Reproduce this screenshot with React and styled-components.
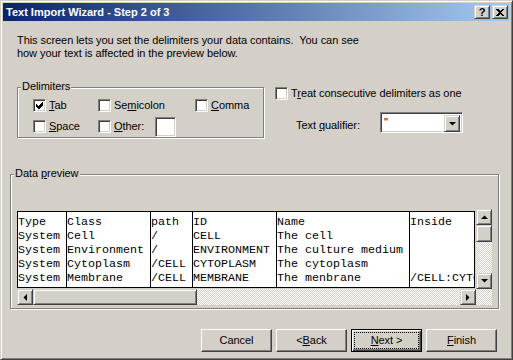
import styled, { createGlobalStyle, css } from "styled-components";

const GlobalStyle = createGlobalStyle`
    html, body {
        margin: 0;
        padding: 0;
        background: #d4d0c8;
    }
    body {
        font-family: "Liberation Sans", Arial, sans-serif;
        font-size: 11px;
        letter-spacing: -0.06px;
        color: #000;
    }
`;

const raised = css`
    box-sizing: border-box;
    background: #d4d0c8;
    border: 1px solid;
    border-color: #d4d0c8 #404040 #404040 #d4d0c8;
    box-shadow: inset 1px 1px #fff, inset -1px -1px #808080;
`;

const sunken = css`
    box-sizing: border-box;
    background: #fff;
    border: 1px solid;
    border-color: #808080 #fff #fff #808080;
    box-shadow: inset 1px 1px #404040, inset -1px -1px #d4d0c8;
`;

const dither = css`
    background-color: #fff;
    background-image: repeating-conic-gradient(#d4d0c8 0 25%, #fff 0 50%);
    background-size: 2px 2px;
`;

const Window = styled.div`
    width: 513px;
    height: 360px;
    box-sizing: border-box;
    border: 1px solid;
    border-color: #d4d0c8 #404040 #404040 #d4d0c8;
    box-shadow: inset 1px 1px #fff, inset -1px -1px #808080;
    padding: 2px;
    background: #d4d0c8;
    display: flex;
    flex-direction: column;
`;

const TitleBar = styled.div`
    height: 18px;
    display: flex;
    align-items: center;
    padding: 0 2px 0 3px;
    background: linear-gradient(to right, #0a246a, #a6caf0);
`;

const TitleText = styled.span`
    color: #fff;
    font-weight: 700;
    font-size: 11px;
    line-height: 13px;
    letter-spacing: 0;
`;

const CaptionButtons = styled.div`
    margin-left: auto;
    display: flex;
    gap: 2px;
`;

const CaptionButton = styled.div`
    ${raised};
    width: 16px;
    height: 14px;
    display: flex;
    align-items: center;
    justify-content: center;
    font-weight: 700;
    font-size: 11px;
    line-height: 12px;
`;

const Content = styled.div`
    flex: 1;
    display: flex;
    flex-direction: column;
`;

const Intro = styled.p`
    margin: 13px 0 0 14px;
    line-height: 13px;
`;

const TopRow = styled.div`
    margin-top: 27px;
    padding-left: 14px;
    display: flex;
    align-items: flex-start;
`;

const GroupBox = styled.div`
    position: relative;
    box-sizing: border-box;
    width: ${(p) => p.$w}px;
    height: ${(p) => p.$h}px;
    border: 1px solid #808080;
    box-shadow: inset 1px 1px #fff, 1px 1px #fff;
    margin: ${(p) => p.$mt || 0}px 0 0 ${(p) => p.$ml || 0}px;
`;

const GroupTitle = styled.span`
    position: absolute;
    top: -8px;
    left: 3px;
    padding: 0 1px;
    line-height: 13px;
    background: #d4d0c8;
`;

const DelimGrid = styled.div`
    padding: 7px 0 0 15px;
    display: grid;
    grid-template-columns: 65px 97px auto;
    grid-auto-rows: 21px;
    align-items: center;
`;

const CheckItem = styled.label`
    display: flex;
    align-items: center;
    gap: 3px;
    line-height: 13px;
`;

const Box = styled.span`
    ${sunken};
    width: 13px;
    height: 13px;
    flex-shrink: 0;
    display: flex;
    align-items: center;
    justify-content: center;
`;

const OtherInput = styled.span`
    ${sunken};
    width: 21px;
    height: 20px;
    margin-left: 8px;
`;

const Key = styled.u`
    text-decoration: underline;
    text-underline-offset: 1px;
`;

const RightCol = styled.div`
    margin-left: 11px;
    display: flex;
    flex-direction: column;
`;

const QualifierRow = styled.div`
    margin-top: 12px;
    padding-left: 21px;
    display: flex;
    align-items: flex-start;
`;

const QualifierLabel = styled.span`
    width: 84px;
    padding-top: 7px;
    line-height: 13px;
`;

const Combo = styled.div`
    ${sunken};
    width: 83px;
    height: 21px;
    display: flex;
    padding: 2px;
`;

const ComboField = styled.span`
    flex: 1;
    padding-left: 1px;
    line-height: 14px;
    color: #000;
`;

const DropButton = styled.span`
    ${raised};
    width: 16px;
    height: 17px;
    display: flex;
    align-items: center;
    justify-content: center;
`;

const PreviewBody = styled.div`
    padding: 34px 0 0 6px;
`;

const PreviewControl = styled.div`
    display: grid;
    grid-template-columns: 459px 16px;
    grid-template-rows: 80px 16px;
`;

const Table = styled.div`
    margin: 2px 1px 1px 0;
    display: flex;
    background: #fff;
    border: 1px solid #000;
    border-left: none;
    overflow: hidden;
    font-family: "Liberation Mono", "Courier New", monospace;
    font-size: 11.67px;
    letter-spacing: 0;
`;

const Column = styled.div`
    width: ${(p) => p.$w}px;
    flex-shrink: 0;
    box-sizing: border-box;
    border-left: 1px solid #000;
    padding-top: 3px;
    overflow: hidden;
`;

const Cell = styled.div`
    height: 14px;
    line-height: 14px;
    white-space: pre;
`;

const VScroll = styled.div`
    display: flex;
    flex-direction: column;
`;

const HScroll = styled.div`
    display: flex;
`;

const ScrollButton = styled.div`
    ${raised};
    width: 16px;
    height: 16px;
    flex-shrink: 0;
    display: flex;
    align-items: center;
    justify-content: center;
`;

const Thumb = styled.div`
    ${raised};
    width: ${(p) => p.$w}px;
    height: ${(p) => p.$h}px;
    flex-shrink: 0;
`;

const Track = styled.div`
    flex: 1;
    ${dither};
`;

const Corner = styled.div`
    ${dither};
`;

const ButtonRow = styled.div`
    margin-top: 20px;
    padding-right: 13px;
    display: flex;
    justify-content: flex-end;
    gap: 4px;
`;

const Button = styled.div`
    box-sizing: border-box;
    width: 71px;
    height: 23px;
    background: #d4d0c8;
    display: flex;
    padding: 2px;
    border: 1px solid;
    border-color: #fff #404040 #404040 #fff;
    box-shadow: inset -1px -1px #808080;

    &.default {
        border-color: #000;
        box-shadow: inset 1px 1px #fff, inset -1px -1px #404040, inset -2px -2px #808080;
    }
`;

const ButtonFace = styled.span`
    flex: 1;
    display: flex;
    align-items: center;
    justify-content: center;
    line-height: 13px;
    border: 1px dotted transparent;

    &.focus {
        border-color: #000;
    }
`;

const Arrow = ({ dir }) => {
    const pts = {
        up: "0,4 7,4 3.5,0.5",
        down: "0,0 7,0 3.5,3.5",
        left: "4,0 4,7 0.5,3.5",
        right: "0,0 0,7 3.5,3.5",
    }[dir];
    const vertical = dir === "up" || dir === "down";
    return (
        <svg
            width={vertical ? 7 : 4}
            height={vertical ? 4 : 7}
            viewBox={vertical ? "0 0 7 4" : "0 0 4 7"}
        >
            <polygon points={pts} fill="#000" />
        </svg>
    );
};

const CheckMark = () => (
    <svg width="7" height="7" viewBox="0 0 7 7" shapeRendering="crispEdges">
        <polygon points="0,2 2,4 6,0 7,0 7,3 3,7 2,7 0,5" fill="#000" />
    </svg>
);

const CheckBox = ({ checked, children }) => (
    <CheckItem>
        <Box>{checked && <CheckMark />}</Box>
        <span>{children}</span>
    </CheckItem>
);

const columns = [
    { w: 49, cells: ["Type", "System", "System", "System", "System"] },
    { w: 84, cells: ["Class", "Cell", "Environment", "Cytoplasm", "Membrane"] },
    { w: 42, cells: ["path", "/", "/", "/CELL", "/CELL"] },
    { w: 84, cells: ["ID", "CELL", "ENVIRONMENT", "CYTOPLASM", "MEMBRANE"] },
    {
        w: 133,
        cells: ["Name", "The cell", "The culture medium", "The cytoplasm", "The menbrane"],
    },
    { w: 65, cells: ["Inside", "", "", "", "/CELL:CYTOPLASM"] },
];

const App = () => {
    return (
        <>
            <GlobalStyle />
            <Window>
                <TitleBar>
                    <TitleText>Text Import Wizard - Step 2 of 3</TitleText>
                    <CaptionButtons>
                        <CaptionButton>?</CaptionButton>
                        <CaptionButton>
                            <svg width="8" height="7" viewBox="0 0 8 7" shapeRendering="crispEdges">
                                <path
                                    d="M0 0h2l2 2 2-2h2L5 3.5 8 7H6L4 5 2 7H0l3-3.5z"
                                    fill="#000"
                                />
                            </svg>
                        </CaptionButton>
                    </CaptionButtons>
                </TitleBar>

                <Content>
                    <Intro>
                        This screen lets you set the delimiters your data contains.{"\u00a0 "}You can see
                        <br />
                        how your text is affected in the preview below.
                    </Intro>

                    <TopRow>
                        <GroupBox $w={247} $h={51}>
                            <GroupTitle>Delimiters</GroupTitle>
                            <DelimGrid>
                                <CheckBox checked>
                                    <Key>T</Key>ab
                                </CheckBox>
                                <CheckBox>
                                    Se<Key>m</Key>icolon
                                </CheckBox>
                                <CheckBox>
                                    <Key>C</Key>omma
                                </CheckBox>
                                <CheckBox>
                                    <Key>S</Key>pace
                                </CheckBox>
                                <CheckItem>
                                    <Box />
                                    <span>
                                        <Key>O</Key>ther:
                                    </span>
                                    <OtherInput />
                                </CheckItem>
                            </DelimGrid>
                        </GroupBox>

                        <RightCol>
                            <CheckBox>
                                T<Key>r</Key>eat consecutive delimiters as one
                            </CheckBox>
                            <QualifierRow>
                                <QualifierLabel>
                                    Text <Key>q</Key>ualifier:
                                </QualifierLabel>
                                <Combo>
                                    <ComboField>"</ComboField>
                                    <DropButton>
                                        <Arrow dir="down" />
                                    </DropButton>
                                </Combo>
                            </QualifierRow>
                        </RightCol>
                    </TopRow>

                    <GroupBox $w={489} $h={135} $ml={7} $mt={36}>
                        <GroupTitle>
                            Data <Key>p</Key>review
                        </GroupTitle>
                        <PreviewBody>
                            <PreviewControl>
                                <Table>
                                    {columns.map((col, i) => (
                                        <Column key={i} $w={col.w}>
                                            {col.cells.map((c, j) => (
                                                <Cell key={j}>{c}</Cell>
                                            ))}
                                        </Column>
                                    ))}
                                </Table>
                                <VScroll>
                                    <ScrollButton>
                                        <Arrow dir="up" />
                                    </ScrollButton>
                                    <Thumb $w={16} $h={17} />
                                    <Track />
                                    <ScrollButton>
                                        <Arrow dir="down" />
                                    </ScrollButton>
                                </VScroll>
                                <HScroll>
                                    <ScrollButton>
                                        <Arrow dir="left" />
                                    </ScrollButton>
                                    <Thumb $w={164} $h={16} />
                                    <Track />
                                    <ScrollButton>
                                        <Arrow dir="right" />
                                    </ScrollButton>
                                </HScroll>
                                <Corner />
                            </PreviewControl>
                        </PreviewBody>
                    </GroupBox>

                    <ButtonRow>
                        <Button>
                            <ButtonFace>Cancel</ButtonFace>
                        </Button>
                        <Button>
                            <ButtonFace>
                                &lt; <Key>B</Key>ack
                            </ButtonFace>
                        </Button>
                        <Button className="default">
                            <ButtonFace className="focus">
                                <Key>N</Key>ext &gt;
                            </ButtonFace>
                        </Button>
                        <Button>
                            <ButtonFace>
                                <Key>F</Key>inish
                            </ButtonFace>
                        </Button>
                    </ButtonRow>
                </Content>
            </Window>
        </>
    );
};

export default App;
